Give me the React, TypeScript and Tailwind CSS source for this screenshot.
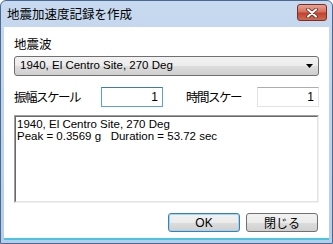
const jp = "font-['Noto_Sans_CJK_JP','Noto_Sans',sans-serif]";
const latin = "font-['Liberation_Sans','Noto_Sans_CJK_JP',sans-serif]";

const btn =
  "w-[72px] h-[19px] rounded-[3px] border flex items-center justify-center text-[12px] leading-none text-black bg-[linear-gradient(#f2f2f2_0%,#ebebeb_50%,#dddddd_51%,#cfcfcf_100%)]";

export default function App() {
  return (
    <div className="w-[333px] h-[244px] bg-white">
      <div className="w-[333px] h-[244px] flex flex-col border border-[#4a6a93] bg-[linear-gradient(#c6d9ef,#b7cde9)] rounded-t-[6px]">
        {/* Title bar */}
        <div className="h-[26px] flex items-center justify-between pl-[6px] pr-[5px] shrink-0">
          <span className={`${jp} text-[12.5px] leading-none text-black`}>
            地震加速度記録を作成
          </span>
          <div className="w-[30px] h-[17px] mb-[3px] rounded-[3px] border border-[#7a2e24] bg-[linear-gradient(#e8a293_0%,#d7715f_45%,#c1432f_55%,#d06a52_100%)] flex items-center justify-center">
            <svg width="12" height="10" viewBox="0 0 12 10">
              <path
                d="M2 1.5 L10 8.5 M10 1.5 L2 8.5"
                stroke="#5c2118"
                strokeWidth="3.6"
                strokeLinecap="round"
              />
              <path
                d="M2 1.5 L10 8.5 M10 1.5 L2 8.5"
                stroke="#ffffff"
                strokeWidth="2.2"
                strokeLinecap="round"
              />
            </svg>
          </div>
        </div>

        {/* Client area */}
        <div className="flex-1 mx-[3px] mb-[3px] bg-white border-b-2 border-[#43c7e4] flex flex-col px-[10px] pt-[9px]">
          <div className={`${jp} text-[12.5px] leading-[16px] text-black`}>地震波</div>

          <div className="mt-[4px] h-[20px] rounded-[3px] border border-[#707070] bg-[linear-gradient(#f2f2f2_0%,#ebebeb_50%,#dddddd_51%,#cfcfcf_100%)] flex items-center justify-between pl-[5px] pr-[5px]">
            <span className={`${latin} text-[11.5px] leading-none text-black`}>
              1940, El Centro Site, 270 Deg
            </span>
            <svg width="7" height="4" viewBox="0 0 7 4">
              <path d="M0 0 H7 L3.5 4 Z" fill="#000" />
            </svg>
          </div>

          <div className="mt-[11px] flex items-center h-[20px]">
            <span className={`${jp} text-[12.5px] leading-none text-black w-[88px] tracking-[-1.5px]`}>
              振幅スケール
            </span>
            <div className="w-[62px] h-[20px] border border-[#5c9fd8] border-t-[#3d7bad] flex items-center justify-end pr-[4px]">
              <span className={`${latin} text-[12px] leading-none`}>1</span>
            </div>
            <span className={`${jp} text-[12.5px] leading-none text-black ml-[23px] w-[72px] tracking-[-1.5px]`}>
              時間スケー
            </span>
            <div className="w-[62px] h-[20px] border border-[#e2e3ea] border-t-[#abadb3] flex items-center justify-end pr-[4px]">
              <span className={`${latin} text-[12px] leading-none`}>1</span>
            </div>
          </div>

          <div className="mt-[8px] h-[88px] border border-[#a0a0a0] border-b-[#f0f0f0] border-r-[#f0f0f0]">
            <div className="h-full border border-[#696969] border-b-[#e3e3e3] border-r-[#e3e3e3] px-[1px] pt-[1px]">
              <div className={`${latin} text-[11.5px] leading-[12px] text-black`}>
                1940, El Centro Site, 270 Deg
              </div>
              <div className={`${latin} text-[11.5px] leading-[12px] text-black whitespace-pre`}>
                {"Peak = 0.3569 g   Duration = 53.72 sec"}
              </div>
            </div>
          </div>

          <div className="mt-[10px] flex justify-end gap-[6px] pr-[1px]">
            <button className={`${btn} ${latin} border-[#3c7fb1] shadow-[inset_0_0_0_1px_#9fd6f5]`}>OK</button>
            <button className={`${btn} ${jp} border-[#707070]`}>閉じる</button>
          </div>
        </div>
      </div>
    </div>
  );
}
